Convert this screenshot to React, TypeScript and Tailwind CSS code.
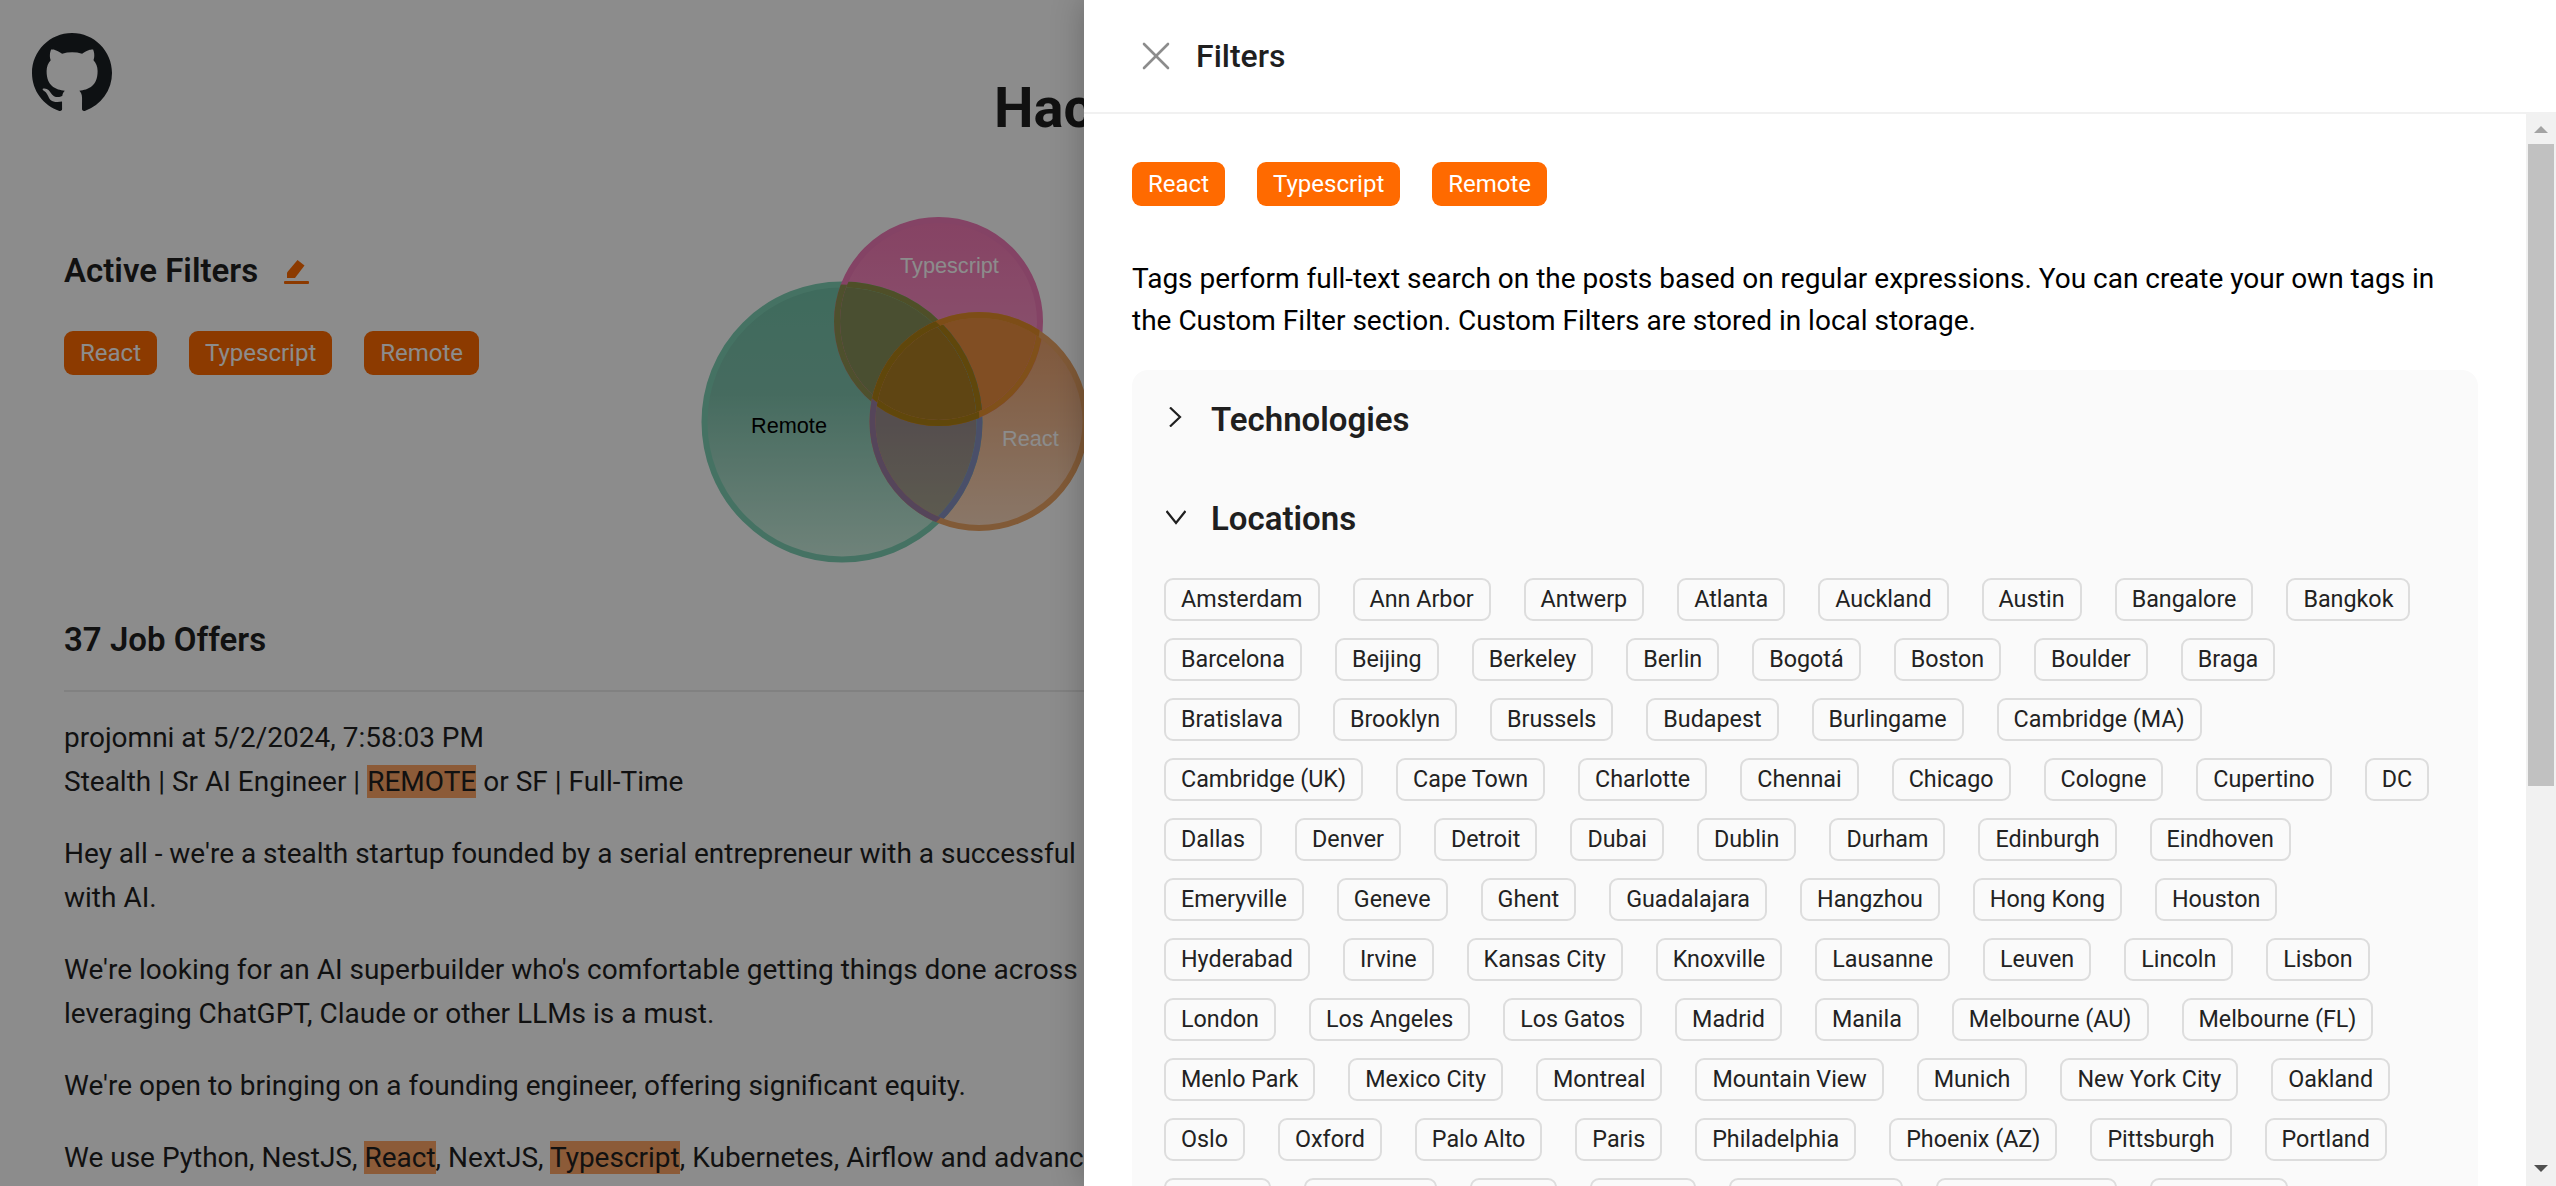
import { ReactNode } from "react";
import { X } from "lucide-react";

const ACTIVE = ["React", "Typescript", "Remote"];

const LOCATIONS = [
  ["Amsterdam", "Ann Arbor", "Antwerp", "Atlanta", "Auckland", "Austin", "Bangalore", "Bangkok"],
  ["Barcelona", "Beijing", "Berkeley", "Berlin", "Bogotá", "Boston", "Boulder", "Braga"],
  ["Bratislava", "Brooklyn", "Brussels", "Budapest", "Burlingame", "Cambridge (MA)"],
  ["Cambridge (UK)", "Cape Town", "Charlotte", "Chennai", "Chicago", "Cologne", "Cupertino", "DC"],
  ["Dallas", "Denver", "Detroit", "Dubai", "Dublin", "Durham", "Edinburgh", "Eindhoven"],
  ["Emeryville", "Geneve", "Ghent", "Guadalajara", "Hangzhou", "Hong Kong", "Houston"],
  ["Hyderabad", "Irvine", "Kansas City", "Knoxville", "Lausanne", "Leuven", "Lincoln", "Lisbon"],
  ["London", "Los Angeles", "Los Gatos", "Madrid", "Manila", "Melbourne (AU)", "Melbourne (FL)"],
  ["Menlo Park", "Mexico City", "Montreal", "Mountain View", "Munich", "New York City", "Oakland"],
  ["Oslo", "Oxford", "Palo Alto", "Paris", "Philadelphia", "Phoenix (AZ)", "Pittsburgh", "Portland"],
  ["Prague", "Princeton", "Reno", "Reston", "Salt Lake City", "San Francisco", "San Diego"],
];

function ActiveTag({ label }: { label: string }) {
  return (
    <span className="flex h-[44px] items-center rounded-[9px] bg-[#ff6a00] px-[16px] text-[24px] text-white">
      {label}
    </span>
  );
}

function Mark({ children }: { children: ReactNode }) {
  return <mark className="bg-[#ffa666] text-[#1f1f1f]">{children}</mark>;
}

type Circle = { cx: number; cy: number; r: number };

// one outline: base colour, then the colour it takes inside each other circle
function Ring({ c, base, a, b, both }: {
  c: Circle; base: string;
  a: [string, string]; b: [string, string];
  both: string;
}) {
  const stroke = { ...c, fill: "none", strokeWidth: 6 };
  return (
    <>
      <circle {...stroke} stroke={base} />
      <g clipPath={`url(#${a[0]})`}><circle {...stroke} stroke={a[1]} /></g>
      <g clipPath={`url(#${b[0]})`}><circle {...stroke} stroke={b[1]} /></g>
      <g clipPath={`url(#${a[0]})`}>
        <g clipPath={`url(#${b[0]})`}><circle {...stroke} stroke={both} /></g>
      </g>
    </>
  );
}

// Venn of the active filters, coordinates are page pixels
function Venn() {
  const green = { cx: 842, cy: 422, r: 137.5 };
  const pink = { cx: 938.5, cy: 321.5, r: 101.5 };
  const orange = { cx: 979, cy: 421.5, r: 106.5 };
  return (
    <svg viewBox="690 210 410 360" className="h-[360px] w-[410px] shrink-0 font-['Liberation_Sans',sans-serif]">
      <defs>
        <linearGradient id="g-green" gradientUnits="userSpaceOnUse" x1="0" y1="285" x2="0" y2="560">
          <stop offset="0" stopColor="#73c3a9" /><stop offset="0.4" stopColor="#80c4ae" /><stop offset="1" stopColor="#ccefdf" />
        </linearGradient>
        <linearGradient id="g-pink" gradientUnits="userSpaceOnUse" x1="0" y1="220" x2="0" y2="425">
          <stop offset="0" stopColor="#f57ab6" /><stop offset="1" stopColor="#fba0d0" />
        </linearGradient>
        <linearGradient id="g-orange" gradientUnits="userSpaceOnUse" x1="0" y1="315" x2="0" y2="530">
          <stop offset="0" stopColor="#e99b64" /><stop offset="1" stopColor="#fbdac0" />
        </linearGradient>
        <linearGradient id="g-go" gradientUnits="userSpaceOnUse" x1="0" y1="420" x2="0" y2="530">
          <stop offset="0" stopColor="#9b8e8e" /><stop offset="1" stopColor="#aba892" />
        </linearGradient>
        <clipPath id="c-green"><circle {...green} /></clipPath>
        <clipPath id="c-pink"><circle {...pink} /></clipPath>
        <clipPath id="c-orange"><circle {...orange} /></clipPath>
      </defs>
      <circle {...green} fill="url(#g-green)" />
      <circle {...pink} fill="url(#g-pink)" />
      <circle {...orange} fill="url(#g-orange)" />
      <g clipPath="url(#c-green)">
        <circle {...orange} fill="url(#g-go)" />
        <circle {...pink} fill="#88915a" />
      </g>
      <g clipPath="url(#c-pink)">
        <circle {...orange} fill="#ec8e40" />
        <g clipPath="url(#c-green)"><circle {...orange} fill="#ad7f24" /></g>
      </g>
      <Ring c={green} base="#7fd0b5" a={["c-pink", "#919149"]} b={["c-orange", "#8891bf"]} both="#b08214" />
      <Ring c={pink} base="#f07ab8" a={["c-green", "#8f9352"]} b={["c-orange", "#ea9230"]} both="#b08214" />
      <Ring c={orange} base="#eca464" a={["c-green", "#9b7fa4"]} b={["c-pink", "#e48c2a"]} both="#b08214" />
      <text x="751" y="433" fontSize="21.7" fill="#000">Remote</text>
      <text x="900" y="273" fontSize="21.7" fill="#fff">Typescript</text>
      <text x="1002" y="446" fontSize="21.7" fill="#fff">React</text>
    </svg>
  );
}

function Page() {
  return (
    <div className="h-full w-full text-[#1f1f1f]">
      <header className="relative flex h-[210px] pl-[994px] pt-[71px]">
        <a className="absolute left-[32px] top-[33px]">
          <svg viewBox="0 0 16 16" className="h-[80px] w-[80px] fill-[#1b1f24]">
            <path d="M8 0C3.58 0 0 3.58 0 8c0 3.54 2.29 6.53 5.47 7.59.4.07.55-.17.55-.38 0-.19-.01-.82-.01-1.49-2.01.37-2.53-.49-2.69-.94-.09-.23-.48-.94-.82-1.13-.28-.15-.68-.52-.01-.53.63-.01 1.08.58 1.23.82.72 1.21 1.87.87 2.33.66.07-.52.28-.87.51-1.07-1.78-.2-3.64-.89-3.64-3.95 0-.87.31-1.59.82-2.15-.08-.2-.36-1.02.08-2.12 0 0 .67-.21 2.2.82.64-.18 1.32-.27 2-.27s1.36.09 2 .27c1.53-1.04 2.2-.82 2.2-.82.44 1.1.16 1.92.08 2.12.51.56.82 1.27.82 2.15 0 3.07-1.87 3.75-3.65 3.95.29.25.54.73.54 1.48 0 1.07-.01 1.93-.01 2.2 0 .21.15.46.55.38A8.013 8.013 0 0016 8c0-4.42-3.58-8-8-8z" />
          </svg>
        </a>
        <h1 className="h-[74px] whitespace-nowrap text-[56px] font-bold leading-[74px]">Hacker News Jobs</h1>
      </header>

      <section className="flex h-[360px]">
        <div className="w-[690px] shrink-0 pl-[64px] pt-[43px]">
          <div className="flex h-[36px] items-center gap-[26px]">
            <h2 className="text-[33px] font-semibold leading-[36px]">Active Filters</h2>
            <svg viewBox="0 0 25 25" className="h-[25px] w-[25px] fill-[#ff6a00]">
              <path d="M3 13.5 13.5 1l7 5.5L11 19H3z" />
              <rect x="0" y="22" width="25" height="3" rx="1" />
            </svg>
          </div>
          <div className="mt-[42px] flex gap-[32px]">
            {ACTIVE.map(t => <ActiveTag key={t} label={t} />)}
          </div>
        </div>
        <Venn />
      </section>

      <div className="px-[64px] pt-[52px]">
        <h2 className="text-[33px] font-semibold leading-[36px]">37 Job Offers</h2>
        <div className="mt-[32px] h-[2px] bg-[#ececec]" />
        <div className="mt-[24px] whitespace-nowrap text-[28px] leading-[44px]">
          <div className="mb-[28px]">
            <div>projomni at 5/2/2024, 7:58:03 PM</div>
            <div>Stealth | Sr AI Engineer | <Mark>REMOTE</Mark> or SF | Full-Time</div>
          </div>
          <div className="mb-[28px]">
            <div>Hey all - we're a stealth startup founded by a serial entrepreneur with a successful</div>
            <div>with AI.</div>
          </div>
          <div className="mb-[28px]">
            <div>We're looking for an AI superbuilder who's comfortable getting things done across</div>
            <div>leveraging ChatGPT, Claude or other LLMs is a must.</div>
          </div>
          <div className="mb-[28px]">We're open to bringing on a founding engineer, offering significant equity.</div>
          <div className="h-[44px] overflow-hidden">We use Python, NestJS, <Mark>React</Mark>, NextJS, <Mark>Typescript</Mark>, Kubernetes, Airflow and advanced</div>
        </div>
      </div>
    </div>
  );
}

function Scrollbar() {
  return (
    <div className="flex w-[30px] shrink-0 flex-col bg-[#f1f1f1]">
      <div className="flex h-[30px] items-center justify-center">
        <div className="h-0 w-0 border-x-[7px] border-b-[7px] border-x-transparent border-b-[#a3a3a3]" />
      </div>
      <div className="mx-[2px] h-[642px] bg-[#c1c1c1]" />
      <div className="flex flex-1 items-end justify-center pb-[14px]">
        <div className="h-0 w-0 border-x-[7px] border-t-[7px] border-x-transparent border-t-[#505050]" />
      </div>
    </div>
  );
}

function Drawer() {
  return (
    <aside className="absolute inset-y-0 right-0 flex w-[1472px] flex-col bg-white shadow-[0_0_30px_rgba(0,0,0,0.25)]">
      <div className="flex h-[114px] shrink-0 items-center gap-[16px] border-b-2 border-[#f1f1f1] pl-[48px]">
        <X className="h-[48px] w-[48px] text-[#8c8c8c]" strokeWidth={1.3} />
        <span className="text-[32px] font-medium text-[#1f1f1f]">Filters</span>
      </div>
      <div className="flex min-h-0 flex-1">
        <div className="min-w-0 flex-1 overflow-hidden px-[48px] pt-[48px]">
          <div className="flex gap-[32px]">
            {ACTIVE.map(t => <ActiveTag key={t} label={t} />)}
          </div>
          <p className="mt-[52px] text-[28px] leading-[42px] text-black">
            Tags perform full-text search on the posts based on regular expressions. You can create your own tags in the Custom Filter section. Custom Filters are stored in local storage.
          </p>
          <div className="mt-[28px] rounded-t-[16px] bg-[#fafafa] px-[32px]">
            <div className="flex h-[98px] items-center gap-[25px] pl-[2px] pt-[2px]">
              <svg viewBox="0 0 20 20" fill="none" stroke="#1f1f1f" strokeWidth="2.2" className="h-[20px] w-[20px] -translate-y-[3px]">
                <path d="M4 0.5 14 10 4 19.5" />
              </svg>
              <span className="text-[33px] font-semibold text-[#1f1f1f]">Technologies</span>
            </div>
            <div className="flex h-[100px] items-center gap-[25px] pl-[2px] pt-[2px]">
              <svg viewBox="0 0 20 20" fill="none" stroke="#1f1f1f" strokeWidth="2.2" className="h-[20px] w-[20px] -translate-y-[2px]">
                <path d="M0.5 4 10 16 19.5 4" />
              </svg>
              <span className="text-[33px] font-semibold text-[#1f1f1f]">Locations</span>
            </div>
            <div className="mt-[10px] flex flex-col gap-[17px]">
              {LOCATIONS.map((row, i) => (
                <div key={i} className="flex gap-[33px]">
                  {row.map(l => (
                    <span key={l} className="flex h-[43px] items-center rounded-[9px] border-2 border-[#dddddd] bg-[#fafafa] px-[15px] text-[23.3px] text-[#222222]">
                      {l}
                    </span>
                  ))}
                </div>
              ))}
            </div>
          </div>
        </div>
        <Scrollbar />
      </div>
    </aside>
  );
}

export default function App() {
  return (
    <div className="relative h-screen w-full overflow-hidden bg-white font-['Roboto',sans-serif]">
      <Page />
      <div className="absolute inset-0 bg-black/45" />
      <Drawer />
    </div>
  );
}
